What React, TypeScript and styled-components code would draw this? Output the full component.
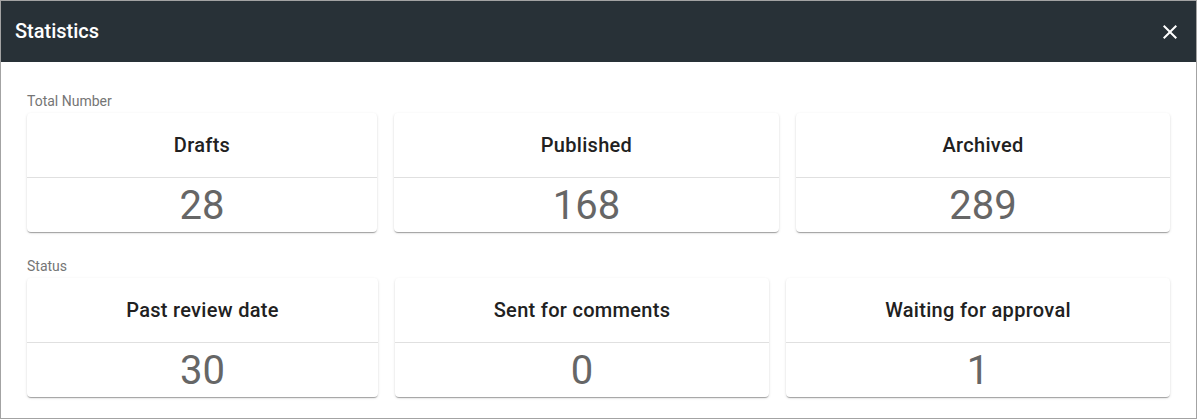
import { FC } from "react";
import styled, { createGlobalStyle } from "styled-components";

const GlobalStyle = createGlobalStyle`
  html, body {
    margin: 0;
    padding: 0;
    background: #ffffff;
    font-family: Roboto, "Noto Sans", "Liberation Sans", sans-serif;
  }
  * {
    box-sizing: border-box;
  }
`;

const Dialog = styled.div`
  width: 1197px;
  height: 419px;
  border: 1px solid #a3a3a3;
  background: #ffffff;
  display: flex;
  flex-direction: column;
`;

const Header = styled.div`
  height: 61px;
  flex-shrink: 0;
  background: #283137;
  color: #ffffff;
  display: flex;
  align-items: center;
  justify-content: space-between;
  padding: 0 12px 0 14px;
`;

const HeaderTitle = styled.div`
  font-size: 20px;
  font-weight: 500;
  margin-top: -2px;
`;

const CloseButton = styled.button`
  width: 28px;
  height: 28px;
  padding: 0;
  border: none;
  background: transparent;
  color: #ffffff;
  display: flex;
  align-items: center;
  justify-content: center;
  cursor: pointer;
`;

const Body = styled.div`
  padding: 31px 26px 0 26px;
  display: flex;
  flex-direction: column;
`;

const SectionLabel = styled.div<{ $first?: boolean }>`
  font-size: 14px;
  line-height: 16px;
  color: #757575;
  margin-top: ${(p) => (p.$first ? "0" : "26px")};
  margin-bottom: 4px;
`;

const CardRow = styled.div`
  display: flex;
  gap: 17px;
`;

const Card = styled.div<{ $w: number }>`
  width: ${(p) => p.$w}px;
  background: #ffffff;
  border-radius: 4px;
  box-shadow: 0 2px 1px -1px rgba(0, 0, 0, 0.2), 0 1px 1px 0 rgba(0, 0, 0, 0.14),
    0 1px 3px 0 rgba(0, 0, 0, 0.12);
  display: flex;
  flex-direction: column;
`;

const CardTitle = styled.div`
  height: 65px;
  display: flex;
  align-items: center;
  justify-content: center;
  font-size: 20px;
  font-weight: 500;
  letter-spacing: 0.3px;
  color: #212121;
  border-bottom: 1px solid #e0e0e0;
`;

const CardValue = styled.div`
  height: 54px;
  display: flex;
  align-items: center;
  justify-content: center;
  font-size: 40px;
  font-weight: 400;
  color: #666666;
`;

interface Stat {
  title: string;
  value: number;
  width: number;
}

const totals: Stat[] = [
  { title: "Drafts", value: 28, width: 350 },
  { title: "Published", value: 168, width: 385 },
  { title: "Archived", value: 289, width: 374 },
];

const statuses: Stat[] = [
  { title: "Past review date", value: 30, width: 351 },
  { title: "Sent for comments", value: 0, width: 374 },
  { title: "Waiting for approval", value: 1, width: 384 },
];

const StatCard: FC<{ stat: Stat }> = ({ stat }) => (
  <Card $w={stat.width}>
    <CardTitle>{stat.title}</CardTitle>
    <CardValue>{stat.value}</CardValue>
  </Card>
);

const CloseIcon = () => (
  <svg width="24" height="24" viewBox="0 0 24 24" fill="currentColor">
    <path d="M19 6.41L17.59 5 12 10.59 6.41 5 5 6.41 10.59 12 5 17.59 6.41 19 12 13.41 17.59 19 19 17.59 13.41 12z" />
  </svg>
);

export default function App() {
  return (
    <>
      <GlobalStyle />
      <Dialog>
        <Header>
          <HeaderTitle>Statistics</HeaderTitle>
          <CloseButton>
            <CloseIcon />
          </CloseButton>
        </Header>
        <Body>
          <SectionLabel $first>Total Number</SectionLabel>
          <CardRow>
            {totals.map((s) => (
              <StatCard key={s.title} stat={s} />
            ))}
          </CardRow>
          <SectionLabel>Status</SectionLabel>
          <CardRow>
            {statuses.map((s) => (
              <StatCard key={s.title} stat={s} />
            ))}
          </CardRow>
        </Body>
      </Dialog>
    </>
  );
}
